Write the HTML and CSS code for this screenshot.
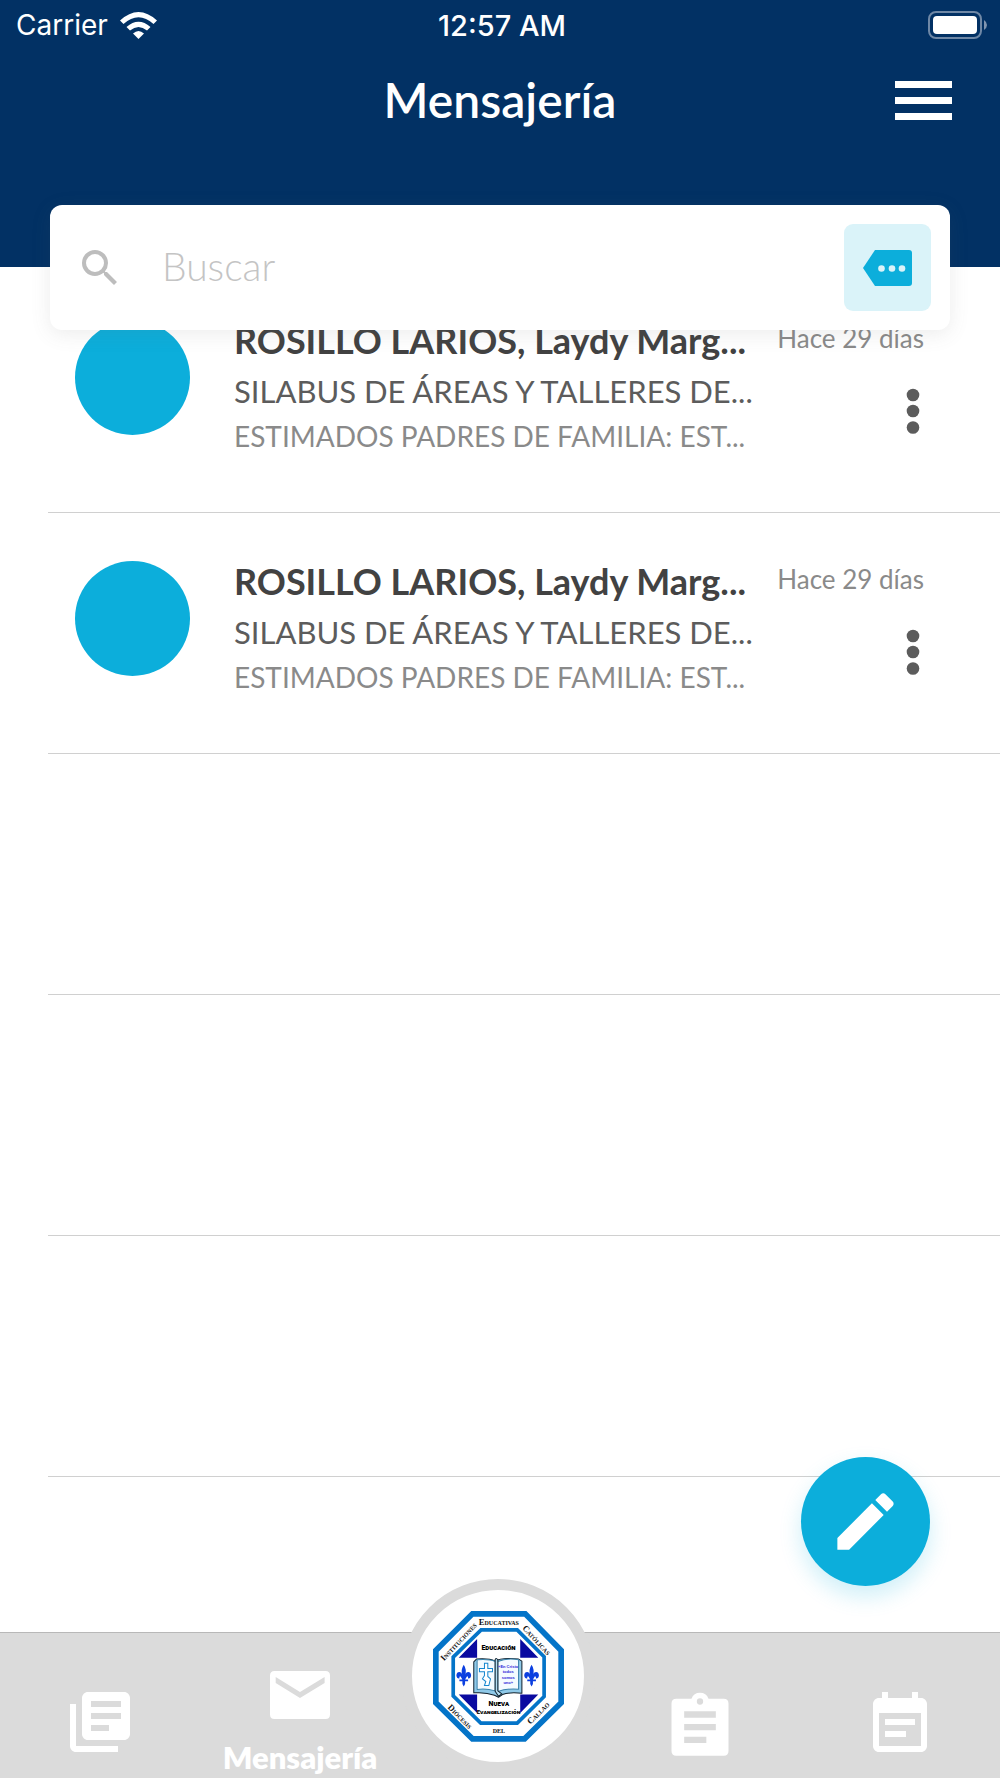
FILE: index.html
```html
<!DOCTYPE html>
<html lang="es">
<head>
<meta charset="utf-8">
<meta name="viewport" content="width=device-width, initial-scale=1">
<title>Mensajería</title>
<link rel="stylesheet" href="styles.css">
</head>
<body>
<header class="header">
  <div class="status">
    <div class="status-left">
      <span>Carrier</span>
      <svg class="wifi" viewBox="0 0 37 27" aria-hidden="true">
        <path d="M0 8.500Q18.500-8.500 37 8.500L33.500 12Q18.500-1.500 3.500 12Z"/>
        <path d="M6.500 15Q18.500 4.500 30.500 15L27 18.500Q18.500 11.500 10 18.500Z"/>
        <path d="M13 21.500Q18.500 16.500 24 21.500L18.500 27Z"/>
      </svg>
    </div>
    <span class="clock">12:57 AM</span>
    <svg class="battery" viewBox="0 0 60 28" aria-hidden="true">
      <rect x="1" y="1" width="52" height="26" rx="7" fill="none" stroke="#6f88a6" stroke-width="2"/>
      <rect x="5" y="5" width="44" height="18" rx="4" fill="#fff"/>
      <path d="M56 9Q59 11 59 14T56 19Z" fill="#8095b0"/>
    </svg>
  </div>
  <div class="titlebar">
    <h1 class="title">Mensajería</h1>
    <button class="menu" aria-label="Menú"><svg viewBox="0 0 57 39"><path d="M0 0h57v7H0zM0 16h57v7H0zM0 32h57v7H0z"/></svg></button>
  </div>
</header>

<form class="search" role="search">
  <label class="search-label" for="q" aria-label="Buscar">
    <svg viewBox="0 0 24 24"><path d="M15.500 14h-.79l-.28-.27A6.471 6.471 0 0 0 16 9.500 6.500 6.500 0 1 0 9.500 16c1.610 0 3.090-.59 4.230-1.570l.27.28v.79l5 4.990L20.490 19l-4.990-5zm-6 0a4.500 4.500 0 1 1 0-9 4.500 4.500 0 0 1 0 9z"/></svg>
  </label>
  <input class="search-input" id="q" type="text" placeholder="Buscar">
  <button class="tag" type="button" aria-label="Etiquetas">
    <svg viewBox="0 0 49 36"><path class="tag-shape" d="M12 0h34q3 0 3 3v30q0 3-3 3H12L0 18Z"/><g class="tag-dots"><circle cx="18.500" cy="18.500" r="3.300"/><circle cx="29" cy="18.500" r="3.300"/><circle cx="39" cy="18.500" r="3.300"/></g></svg>
  </button>
</form>

<main class="main">
  <ul class="list">
    <li class="row">
      <span class="avatar"></span>
      <div class="message">
        <h2 class="name">ROSILLO LARIOS, Laydy Marg...</h2>
        <p class="subject">SILABUS DE ÁREAS Y TALLERES DE...</p>
        <p class="preview">ESTIMADOS PADRES DE FAMILIA: EST...</p>
      </div>
      <div class="side">
        <time class="date">Hace 29 días</time>
        <button class="more" aria-label="Opciones"><svg viewBox="0 0 14 46"><circle cx="7" cy="7" r="6.300"/><circle cx="7" cy="23" r="6.300"/><circle cx="7" cy="39.500" r="6.300"/></svg></button>
      </div>
    </li>
    <li class="row">
      <span class="avatar"></span>
      <div class="message">
        <h2 class="name">ROSILLO LARIOS, Laydy Marg...</h2>
        <p class="subject">SILABUS DE ÁREAS Y TALLERES DE...</p>
        <p class="preview">ESTIMADOS PADRES DE FAMILIA: EST...</p>
      </div>
      <div class="side">
        <time class="date">Hace 29 días</time>
        <button class="more" aria-label="Opciones"><svg viewBox="0 0 14 46"><circle cx="7" cy="7" r="6.300"/><circle cx="7" cy="23" r="6.300"/><circle cx="7" cy="39.500" r="6.300"/></svg></button>
      </div>
    </li>
    <li class="row"></li>
    <li class="row"></li>
    <li class="row"></li>
  </ul>
  <button class="fab" aria-label="Redactar"><svg viewBox="0 0 24 24"><path d="M3 17.250V21h3.750L17.810 9.940l-3.750-3.750L3 17.250zM20.710 7.040c.39-.39.39-1.020 0-1.410l-2.340-2.340c-.39-.39-1.020-.39-1.410 0l-1.830 1.830 3.750 3.750 1.830-1.830z"/></svg></button>
</main>

<nav class="tabs">
  <a class="tab" href="#" aria-label="Cursos"><svg class="tab-icon" viewBox="0 0 24 24"><path d="M4 6H2v14c0 1.100.9 2 2 2h14v-2H4V6zm16-4H8c-1.100 0-2 .9-2 2v12c0 1.100.9 2 2 2h12c1.100 0 2-.9 2-2V4c0-1.100-.9-2-2-2zm-1 9H9V9h10v2zm-4 4H9v-2h6v2zm4-8H9V5h10v2z"/></svg></a>
  <a class="tab tab-active" href="#"><svg class="tab-icon" viewBox="0 0 24 24"><path d="M20.500 4h-17Q2 4 2 5.500v13Q2 20 3.500 20h17q1.500 0 1.500-1.500v-13Q22 4 20.500 4zM20.200 8 12 13 3.900 8V6l8.100 5 8.200-5z"/></svg><span class="tab-label">Mensajería</span></a>
  <a class="tab tab-home" href="#" aria-label="Inicio">
    <span class="seal">
      <svg viewBox="95 149 398 398">
        <path d="M216 160.500H374L481.500 270V427L372 534.500H216L106.500 427V270Z" fill="#fff" stroke="#0474c8" stroke-width="17"/>
        <path d="M242 208.500H350L430.500 289V408L350 487.500H241L158.500 406V290Z" fill="#fff" stroke="#0474c8" stroke-width="11"/>
        <path d="M230 236V292H175ZM359 236V292H413ZM230 457V402H175ZM359 457V402H413Z" fill="#0a0aa0"/>
        <g class="seal-ring">
          <text x="295" y="194">Educativas</text>
          <text transform="translate(179 248) rotate(-47)" y="2">Instituciones</text>
          <text transform="translate(405 242) rotate(47)" y="4">Católicas</text>
          <text transform="translate(176 471) rotate(45)" y="4">Diócesis</text>
          <text transform="translate(416 460) rotate(-45)" y="4">Callao</text>
          <text x="295" y="518">del</text>
        </g>
        <g class="seal-motto">
          <text x="294" y="268">Educación</text>
          <text x="295" y="436">Nueva</text>
          <text class="seal-motto-long" x="294" y="459">Evangelización</text>
        </g>
        <g stroke="#10202c" stroke-width="3" stroke-linejoin="round">
          <path d="M220 304 228 296Q265 293 284 302 302 291 354 296L364 302V398Q325 394 306 402L294 410 282 404Q255 394 220 397Z" fill="#8fc9e8"/>
          <path d="M230 298Q265 295 284 303V391Q256 383 230 387ZM292 303Q320 292 354 298V386Q320 383 292 393Z" fill="#f4fbff" stroke="#3b83ab"/>
          <path d="M284 297V392L294 407 304 400 292 391V299Q288 291 284 297Z" fill="#b5dff3"/>
        </g>
        <path d="M252 308h10v16h14v10h-14v14l8 7-5 20h-13l4-12-10-8 6-10v-11h-15v-10h15Z" fill="#fff" stroke="#1687cf" stroke-width="3"/>
        <g class="seal-page"><text x="323" y="322">«En Cristo</text><text x="323" y="339">todos</text><text x="323" y="355">somos</text><text x="323" y="371">uno»</text></g>
        <g fill="#0b3fe0">
          <path id="lis" d="M190 313Q180 328 186 345C184 331 168 332 168 345Q169 355 177 354 176 347 180 347L186 357H177V362H186Q184 371 190 378 196 371 194 362H203V357H194L200 347Q204 347 203 354 211 355 212 345C212 332 196 331 194 345Q200 328 190 313Z"/>
          <use href="#lis" x="203"/>
        </g>
      </svg>
    </span>
  </a>
  <a class="tab" href="#" aria-label="Tareas"><svg class="tab-icon tab-icon-large" viewBox="0 0 24 24"><path fill-rule="evenodd" d="M19.500 4H14.700A2.900 2.900 0 0 0 9.300 4H4.500Q3 4 3 5.500V20.500Q3 22 4.500 22H19.500Q21 22 21 20.500V5.500Q21 4 19.500 4ZM12 3.900A1 1 0 1 1 12 5.900 1 1 0 0 1 12 3.900ZM7 8H17V10H7ZM7 12H17V14H7ZM7 16H14V18H7Z"/></svg></a>
  <a class="tab" href="#" aria-label="Agenda"><svg class="tab-icon" viewBox="0 0 24 24"><path d="M17 12H7v2h10v-2zm2-7h-1V3h-2v2H8V3H6v2H5c-1.100 0-2 .9-2 2v14c0 1.100.9 2 2 2h14c1.100 0 2-.9 2-2V7c0-1.100-.9-2-2-2zm0 16H5V10h14v11zm-5-5H7v2h7v-2z" transform="translate(0 -1)"/></svg></a>
</nav>
</body>
</html>
```
FILE: styles.css
```css
* { box-sizing: border-box; }

body {
  margin: 0;
  min-height: 100vh;
  display: flex;
  flex-direction: column;
  background: #fff;
  font-family: Lato, "Open Sans", sans-serif;
  color: #424242;
}

button {
  border: 0;
  padding: 0;
  background: none;
  cursor: pointer;
}

svg { display: block; }
h1, h2, p { margin: 0; }

.header {
  height: 267px;
  background: #023164;
  color: #fff;
}

.status {
  display: grid;
  grid-template-columns: 1fr auto 1fr;
  align-items: center;
  height: 50px;
  padding: 0 12px 0 16px;
  font-family: Inter, sans-serif;
  font-size: 28px;
}

.status-left { display: flex; align-items: center; gap: 12px; }
.wifi { width: 37px; height: 27px; fill: #fff; }
.clock { font-size: 29px; font-weight: 500; }
.battery { width: 60px; height: 28px; justify-self: end; }

.titlebar {
  display: grid;
  grid-template-columns: 1fr auto 1fr;
  align-items: center;
  height: 100px;
  padding: 0 48px;
}

.title {
  grid-column: 2;
  font-size: 48px;
  line-height: 58px;
  font-weight: 600;
}

.menu { justify-self: end; }
.menu svg { width: 57px; height: 39px; fill: #fff; }

.search {
  position: relative;
  z-index: 1;
  display: flex;
  align-items: center;
  height: 125px;
  margin: -62px 50px 0;
  padding: 0 19px 0 26px;
  background: #fff;
  border-radius: 12px;
  box-shadow: 0 4px 20px rgba(100, 100, 100, .12);
}

.search-label svg { width: 48px; height: 48px; fill: #bdbdbd; }

.search-input {
  flex: 1;
  min-width: 0;
  margin: 0 24px 4px 38px;
  padding: 0;
  border: 0;
  outline: 0;
  background: none;
  font: 300 39px/48px Lato, sans-serif;
  color: #424242;
}

.search-input::placeholder { color: #c4c4c4; opacity: 1; }

.tag {
  display: grid;
  place-items: center;
  width: 87px;
  height: 87px;
  border-radius: 9px;
  background: #daf3f9;
}

.tag svg { width: 49px; height: 36px; }
.tag-shape { fill: #0caedb; }
.tag-dots { fill: #daf3f9; }

.main { flex: 1; margin-top: -58px; }

.list { margin: 0; padding: 0; list-style: none; }

.row {
  display: flex;
  min-height: 241px;
  margin-left: 48px;
  padding: 48px 76px 0 27px;
  border-bottom: 1px solid #d0d0d0;
}

.avatar {
  flex: none;
  width: 115px;
  height: 115px;
  border-radius: 50%;
  background: #0caedb;
}

.message {
  flex: 1;
  min-width: 0;
  margin-left: 44px;
  white-space: nowrap;
}

.name { font-size: 36px; line-height: 40px; font-weight: 700; }
.subject { margin-top: 8px; font-size: 31px; line-height: 46px; color: #5c5c5c; }
.preview { font-size: 28px; line-height: 44px; color: #8a8a8a; }

.side {
  display: flex;
  flex-direction: column;
  align-items: flex-end;
  gap: 32px;
}

.date { font-size: 26px; line-height: 36px; color: #8a8a8a; }
.more { margin-right: 4px; }
.more svg { width: 14px; height: 46px; fill: #5c5c5c; }

.fab {
  position: fixed;
  right: 70px;
  bottom: 192px;
  display: grid;
  place-items: center;
  width: 129px;
  height: 129px;
  border-radius: 50%;
  background: #0caedb;
  box-shadow: 0 10px 22px rgba(12, 174, 219, .2);
}

.fab svg { width: 75px; height: 75px; fill: #fff; }

.tabs {
  display: grid;
  grid-template-columns: repeat(5, 1fr);
  height: 146px;
  border-top: 1px solid #b8b8b8;
  background: #dbdbdb;
}

.tab {
  display: flex;
  flex-direction: column;
  align-items: center;
  padding-top: 53px;
  color: #fff;
  text-decoration: none;
}

.tab-icon { width: 72px; height: 72px; fill: #fff; }
.tab-icon-large { width: 76px; height: 76px; }
.tab-active { padding-top: 26px; }
.tab-label { font-size: 31px; line-height: 36px; font-weight: 800; margin-top: 8px; }
.tab-home { padding: 0 4px 0 0; }

.seal {
  flex: none;
  display: grid;
  place-items: center;
  width: 194px;
  height: 194px;
  margin-top: -54px;
  border: 11px solid #dbdbdb;
  border-radius: 50%;
  background: #fff;
}

.seal svg { width: 133px; height: 133px; }
.seal text { text-anchor: middle; }
.seal-ring { font-family: "Liberation Serif", serif; font-size: 26px; font-weight: 700; font-variant: small-caps; fill: #111; }
.seal-motto { font-family: Roboto, sans-serif; font-size: 21px; font-weight: 900; font-variant: small-caps; fill: #000; }
.seal-motto-long { font-size: 18px; }
.seal-page { font-family: "Liberation Sans", sans-serif; font-size: 12px; font-weight: 700; fill: #2b22d8; }
```
